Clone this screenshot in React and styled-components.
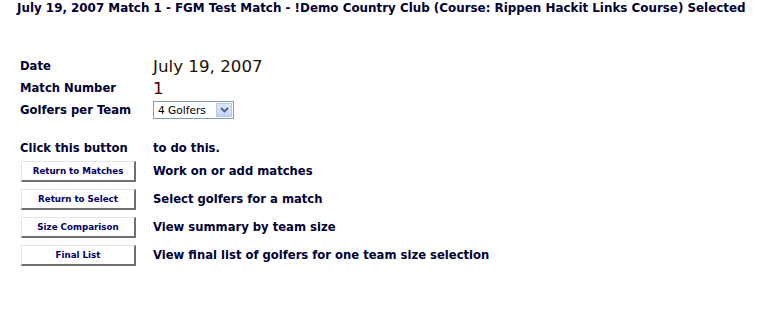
import React from "react";
import styled, { createGlobalStyle } from "styled-components";

const Global = createGlobalStyle`
  html, body { margin: 0; padding: 0; background: #fff; }
  body { font-family: "DejaVu Sans", Verdana, sans-serif; color: #000033; }
`;

const Page = styled.div`
  width: 775px;
  height: 312px;
  box-sizing: border-box;
  padding: 0 0 0 17px;
  overflow: hidden;
`;

const Title = styled.h1`
  margin: 0;
  padding-top: 1px;
  font-size: 11.9px;
  line-height: 14px;
  font-weight: bold;
  color: #000033;
  white-space: nowrap;
`;

const Grid = styled.div`
  display: grid;
  grid-template-columns: 133px auto;
  margin-left: 3px;
  margin-top: ${(p) => p.$top}px;
  row-gap: ${(p) => p.$gap}px;
  align-items: center;
`;

const Label = styled.div`
  font-size: 11.6px;
  font-weight: bold;
  line-height: ${(p) => p.$lh || 22}px;
  color: #000033;
  white-space: nowrap;
`;

const Value = styled.div`
  font-size: ${(p) => p.$size || 16.7}px;
  line-height: 22px;
  color: ${(p) => p.$color || "#221100"};
  white-space: nowrap;
`;

const Select = styled.div`
  display: flex;
  align-items: center;
  width: 81px;
  height: 18px;
  box-sizing: border-box;
  border: 1px solid #7f9db9;
  background: #fff;
  padding: 1px;
`;

const SelectText = styled.span`
  flex: 1;
  font-size: 10.6px;
  padding-left: 3px;
  color: #000;
`;

const Arrow = styled.span`
  width: 16px;
  height: 14px;
  box-sizing: border-box;
  border: 1px solid #b4c8f0;
  background: linear-gradient(#dfe8fb, #c1d3fb);
  display: flex;
  align-items: center;
  justify-content: center;
`;

const Button = styled.button`
  display: block;
  width: 115px;
  height: 21px;
  box-sizing: border-box;
  background: #fff;
  border-style: solid;
  border-width: 1px 2px 2px 1px;
  border-color: #e4e4e4 #707070 #707070 #e4e4e4;
  font-family: "DejaVu Sans", Verdana, sans-serif;
  font-size: 8.7px;
  font-weight: bold;
  color: #000066;
  padding: 0;
  margin: 0 0 0 1px;
  cursor: pointer;
`;

const rows = [
  ["Return to Matches", "Work on or add matches"],
  ["Return to Select", "Select golfers for a match"],
  ["Size Comparison", "View summary by team size"],
  ["Final List", "View final list of golfers for one team size selection"],
];

export default function App() {
  return (
    <Page>
      <Global />
      <Title>
        July 19, 2007 Match 1 - FGM Test Match - !Demo Country Club (Course: Rippen Hackit Links Course) Selected
      </Title>
      <Grid $top={40} $gap={0}>
        <Label>Date</Label>
        <Value>July 19, 2007</Value>
        <Label>Match Number</Label>
        <Value $color="#440000">1</Value>
        <Label>Golfers per Team</Label>
        <div>
          <Select>
            <SelectText>4 Golfers</SelectText>
            <Arrow>
              <svg width="9" height="6" viewBox="0 0 9 6">
                <path d="M1 1 L4.5 4.5 L8 1" fill="none" stroke="#4d6185" strokeWidth="1.8" />
              </svg>
            </Arrow>
          </Select>
        </div>
      </Grid>
      <Grid $top={21} $gap={7}>
        <Label $lh={12}>Click this button</Label>
        <Label $lh={12}>to do this.</Label>
        {rows.map(([b, d]) => (
          <React.Fragment key={b}>
            <div>
              <Button>{b}</Button>
            </div>
            <Label $lh={21}>{d}</Label>
          </React.Fragment>
        ))}
      </Grid>
    </Page>
  );
}
